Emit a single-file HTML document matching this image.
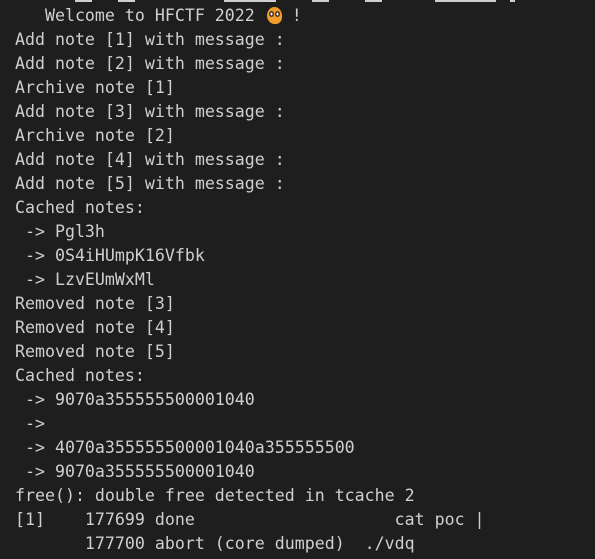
<!DOCTYPE html>
<html><head><style>
body{margin:0;background:#1e1e1e;width:595px;height:559px;overflow:hidden;position:relative}
pre{margin:0;position:absolute;left:15px;top:4px;font-family:"DejaVu Sans Mono","Liberation Mono",monospace;font-size:16.6px;line-height:24px;color:#cfcfcf;white-space:pre}
.bar{position:absolute;top:0;height:2px;background:#cfcfcf}
.emo{display:inline-block;width:15px;height:17px;background:#f29b2a;border-radius:50% 50% 40% 50%;vertical-align:-3px;margin:0 10px 0 2px;position:relative}
.emo:before,.emo:after{content:"";position:absolute;top:4px;width:5px;height:6px;background:#fff;border-radius:50%;box-shadow:inset 0 0 0 1.5px #3a2a1a}
.emo:before{left:2px}.emo:after{left:8px}
</style></head><body>
<div class="bar" style="left:75px;width:17px"></div>
<div class="bar" style="left:118px;width:17px"></div>
<div class="bar" style="left:224px;width:52px"></div>
<div class="bar" style="left:312px;width:17px"></div>
<div class="bar" style="left:365px;width:17px"></div>
<div class="bar" style="left:435px;width:61px"></div>
<div class="bar" style="left:510px;width:5px"></div>
<pre>   Welcome to HFCTF 2022 <span class="emo"></span>!
Add note [1] with message :
Add note [2] with message :
Archive note [1]
Add note [3] with message :
Archive note [2]
Add note [4] with message :
Add note [5] with message :
Cached notes:
 -> Pgl3h
 -> 0S4iHUmpK16Vfbk
 -> LzvEUmWxMl
Removed note [3]
Removed note [4]
Removed note [5]
Cached notes:
 -> 9070a355555500001040
 ->
 -> 4070a355555500001040a355555500
 -> 9070a355555500001040
free(): double free detected in tcache 2
[1]    177699 done                    cat poc |
       177700 abort (core dumped)  ./vdq</pre>
</body></html>
